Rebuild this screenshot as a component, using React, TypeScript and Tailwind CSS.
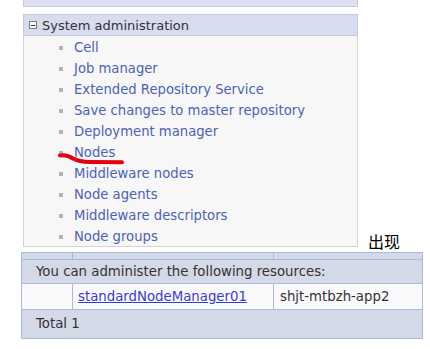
import React from "react";

const items = [
  "Cell",
  "Job manager",
  "Extended Repository Service",
  "Save changes to master repository",
  "Deployment manager",
  "Nodes",
  "Middleware nodes",
  "Node agents",
  "Middleware descriptors",
  "Node groups",
];

export default function App() {
  return (
    <div
      className="relative w-[430px] h-[349px] overflow-hidden bg-white text-[13px] text-[#333]"
      style={{ fontFamily: '"DejaVu Sans", "Noto Sans CJK SC", sans-serif' }}
    >
      <div className="flex items-end pl-[23px]">
        <div className="w-[335px]">
          <div className="h-[7px] bg-[#dcdff0] border-x border-b border-[#c9cce0]" />
          <div className="mt-[7px] h-[22px] bg-[#d8dcef] border border-[#c6cadf] flex items-center">
            <span className="ml-[5px] w-[8px] h-[8px] border border-[#7d7d7d] bg-white flex items-center justify-center">
              <span className="w-[4px] h-px bg-[#333]" />
            </span>
            <span className="ml-[5px] leading-none text-[#333]">System administration</span>
          </div>
          <ul className="h-[211px] bg-[#f7f7f7] border-x border-b border-[#d4d4d4] pt-[1px]">
            {items.map((t) => (
              <li key={t} className="h-[21px] flex items-center">
                <span className="ml-[35px] w-[4px] h-[4px] bg-[#b4b4b4]" />
                <span className="ml-[11px] text-[13.2px] text-[#4d62b6] leading-none">{t}</span>
              </li>
            ))}
          </ul>
        </div>
        <span
          className="ml-[10px] mb-[-2px] text-[16px] leading-[16px] text-black"
          style={{ fontFamily: '"Noto Sans CJK SC", sans-serif' }}
        >
          出现
        </span>
      </div>

      <div className="mt-[5px] ml-[21px] w-[402px] border border-[#a9bbdc] bg-[#d4d9e8] text-[13.3px]">
        <div className="h-[6px] flex">
          <div className="w-[51px] border-r border-[#a9bbdc]" />
          <div className="w-[201px] border-r border-[#a9bbdc]" />
          <div className="flex-1" />
        </div>
        <div className="h-[24px] border-t border-[#a9bbdc] flex items-center pl-[14px] text-[#333]">
          You can administer the following resources:
        </div>
        <div className="h-[26px] border-t border-[#a9bbdc] flex bg-[#f9f9fb]">
          <div className="w-[51px] border-r border-[#a9bbdc]" />
          <div className="w-[201px] border-r border-[#a9bbdc] flex items-center pl-[5px]">
            <span className="text-[#3b3bd4] underline">standardNodeManager01 </span>
          </div>
          <div className="flex-1 flex items-center pl-[6px] text-[#333]">shjt-mtbzh-app2</div>
        </div>
        <div className="h-[29px] border-t border-[#a9bbdc] flex items-center pl-[14px] text-[#333]">
          Total 1
        </div>
      </div>

      <svg
        className="absolute left-[58px] top-[152px]"
        width="68"
        height="16"
        viewBox="0 0 68 16"
      >
        <path
          d="M2 3.5 Q 9 2.5 15 6.5 Q 21 9.8 32 10 L 64 10.3"
          fill="none"
          stroke="#e5000f"
          strokeWidth="4"
          strokeLinecap="round"
          strokeLinejoin="round"
        />
      </svg>
    </div>
  );
}
